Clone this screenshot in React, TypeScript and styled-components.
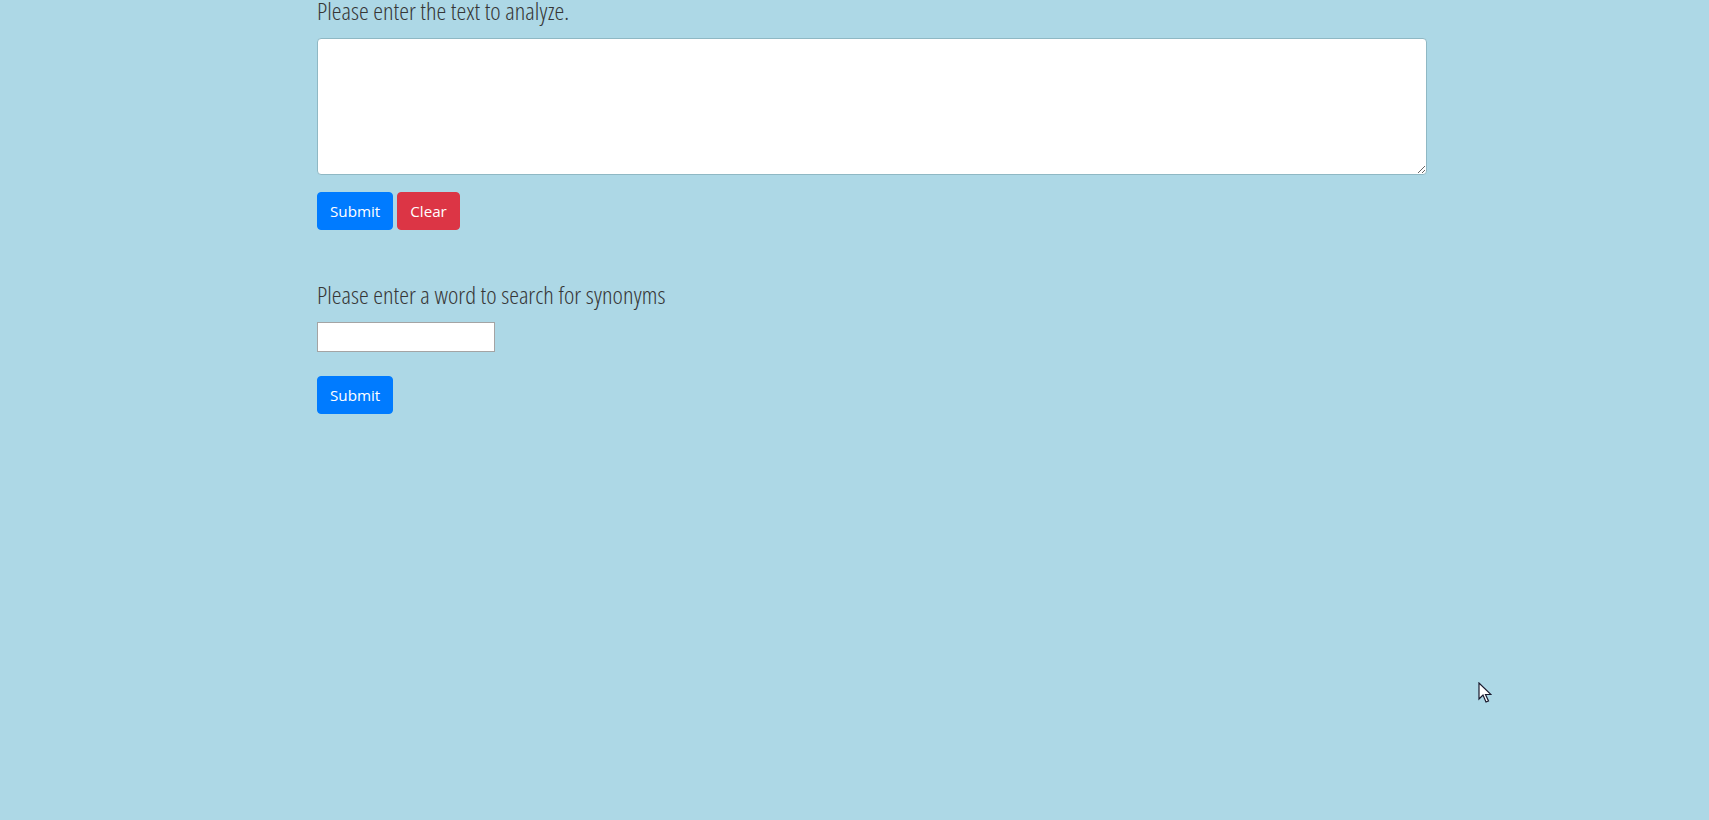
import styled, { createGlobalStyle } from 'styled-components';

const GlobalStyle = createGlobalStyle`
  html, body {
    margin: 0;
    padding: 0;
    background-color: #add8e6;
  }
  body {
    min-height: 820px;
    overflow: hidden;
  }
`;

const App: React.FC = () => {
  return (
    <>
      <GlobalStyle />
      <PageWrapper>
        <Section>
          <FieldLabel $first>Please enter the text to analyze.</FieldLabel>
          <TextArea />
          <ButtonRow>
            <ActionButton $variant="primary">Submit</ActionButton>
            <ActionButton $variant="danger">Clear</ActionButton>
          </ButtonRow>
        </Section>

        <Section>
          <FieldLabel>Please enter a word to search for synonyms</FieldLabel>
          <WordInput type="text" />
          <ButtonRow $spaced>
            <ActionButton $variant="primary">Submit</ActionButton>
          </ButtonRow>
        </Section>
      </PageWrapper>

      <Cursor width="14" height="22" viewBox="0 0 14 22">
        <path
          d="M1 1 L1 17 L5 13 L8 20 L10.5 19 L7.5 12.5 L13 12.5 Z"
          fill="#fff"
          stroke="#1a1a2e"
          strokeWidth="1.2"
          strokeLinejoin="miter"
        />
      </Cursor>
    </>
  );
};

const PageWrapper = styled.div`
  width: 1110px;
  padding-left: 317px;
  display: flex;
  flex-direction: column;
  gap: 50px;
`;

const Section = styled.div`
  display: flex;
  flex-direction: column;
  align-items: flex-start;
`;

const FieldLabel = styled.label<{ $first?: boolean }>`
  font-family: 'Open Sans', 'Noto Sans', sans-serif;
  font-stretch: 75%;
  font-weight: 300;
  font-size: 24.7px;
  line-height: 30px;
  color: #363636;
  margin-top: ${({ $first }) => ($first ? '-4px' : '0')};
  margin-bottom: 12px;
`;

const TextArea = styled.textarea`
  box-sizing: border-box;
  width: 1110px;
  height: 137px;
  background: #fff;
  border: 1px solid #8fb8c4;
  border-radius: 4px;
  resize: vertical;
  outline: none;
`;

const WordInput = styled.input`
  box-sizing: border-box;
  width: 178px;
  height: 30px;
  background: #fff;
  border: 1px solid #a4a4a4;
  border-radius: 0;
  padding: 1px 2px;
  outline: none;
`;

const ButtonRow = styled.div<{ $spaced?: boolean }>`
  display: flex;
  gap: 4px;
  margin-top: ${({ $spaced }) => ($spaced ? '24px' : '17px')};
`;

const ActionButton = styled.button<{ $variant: 'primary' | 'danger' }>`
  box-sizing: border-box;
  height: 38px;
  padding: 6px 12px;
  font-family: 'Open Sans', 'Noto Sans', sans-serif;
  font-size: 15.2px;
  line-height: 24px;
  color: #fff;
  border: 1px solid
    ${({ $variant }) => ($variant === 'primary' ? '#007bff' : '#dc3545')};
  background-color: ${({ $variant }) =>
    $variant === 'primary' ? '#007bff' : '#dc3545'};
  border-radius: 4px;
  cursor: pointer;
`;

const Cursor = styled.svg`
  position: absolute;
  left: 1478px;
  top: 682px;
`;

export default App;
